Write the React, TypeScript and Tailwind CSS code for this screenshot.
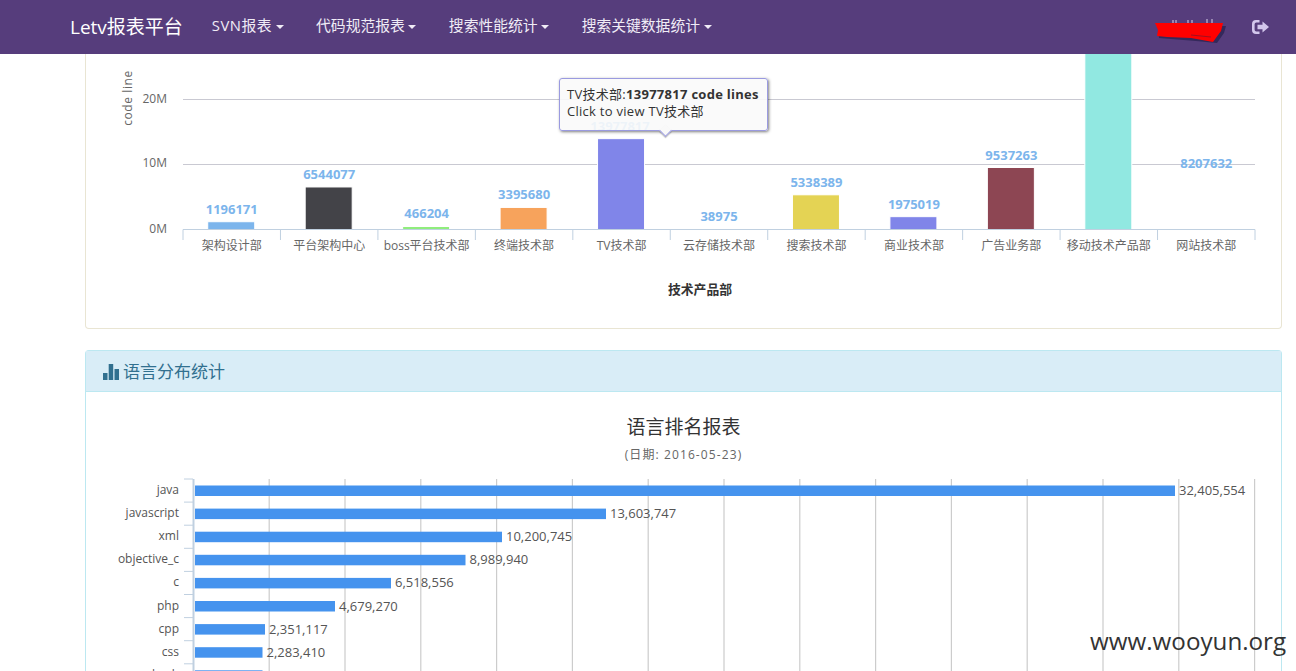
const uiFont = '"Open Sans", "Noto Sans CJK SC", sans-serif';

const departments = [
  { name: '架构设计部', value: 1196171, color: '#7cb5ec' },
  { name: '平台架构中心', value: 6544077, color: '#434348' },
  { name: 'boss平台技术部', value: 466204, color: '#90ed7d' },
  { name: '终端技术部', value: 3395680, color: '#f7a35c' },
  { name: 'TV技术部', value: 13977817, color: '#8085e9' },
  { name: '云存储技术部', value: 38975, color: '#f15c80' },
  { name: '搜索技术部', value: 5338389, color: '#e4d354' },
  { name: '商业技术部', value: 1975019, color: '#8085e9' },
  { name: '广告业务部', value: 9537263, color: '#8d4653' },
  { name: '移动技术产品部', value: 40000000, color: '#91e8e1' },
  { name: '网站技术部', value: 8207632, color: 'none' },
];

const languages = [
  { name: 'java', label: '32,405,554', end: 1175 },
  { name: 'javascript', label: '13,603,747', end: 606 },
  { name: 'xml', label: '10,200,745', end: 502 },
  { name: 'objective_c', label: '8,989,940', end: 465.5 },
  { name: 'c', label: '6,518,556', end: 391 },
  { name: 'php', label: '4,679,270', end: 335 },
  { name: 'cpp', label: '2,351,117', end: 265 },
  { name: 'css', label: '2,283,410', end: 262.5 },
  { name: 'bash', label: '2,270,500', end: 262.5 },
];

const menus = ['SVN报表', '代码规范报表', '搜索性能统计', '搜索关键数据统计'];

function NavBar() {
  return (
    <header className="flex h-[54px] shrink-0 items-center bg-[#563d7c] pl-[55px] text-[#f0ecf6]">
      <a className="pl-[15px] pr-[12.75px] text-[19px] text-white">Letv报表平台</a>
      {menus.map((menu) => (
        <a key={menu} className="flex items-center px-[16.25px] pb-[3px] text-[14.8px] first-of-type:tracking-normal [&:nth-child(2)]:tracking-[0.5px]">
          {menu}
          <span className="ml-[3.5px] mt-[2px] h-0 w-0 border-x-4 border-t-4 border-x-transparent border-t-[#f0ecf6]" />
        </a>
      ))}
      <div className="ml-auto flex items-center pr-[27px]">
        <Scribble />
        <svg viewBox="0 0 17 16" className="ml-[25px] h-4 w-[17px] fill-[#d3c7ec]">
          <path d="M7.5 1H4a4 4 0 0 0-4 4v6a4 4 0 0 0 4 4h3.5v-2.6H4.3A1.7 1.7 0 0 1 2.6 10.7V5.3A1.7 1.7 0 0 1 4.3 3.6h3.2z" />
          <path d="M5.5 5.7h5V2.4L17 8l-6.5 5.6v-3.3h-5z" />
        </svg>
      </div>
    </header>
  );
}

function Scribble() {
  return (
    <svg viewBox="0 0 72 32" className="h-8 w-[72px]">
      <path d="M18 9v3M21 9v3M33 9v3M37 9v3M52 8v4M57 8v4" stroke="#d8d0e6" strokeWidth="1" />
      <path d="M3 15 L71 15 L69 22 L62 32 L41 30 L16 28 L4 27z" fill="#2a2350" opacity="0.75" />
      <path d="M0 12 L68 12 L66 20 L58 31 L36 27 L12 26 L2 25 L3 19z" fill="#ff0000" />
      <path d="M36 24 L56 26" stroke="#a01020" strokeWidth="1" />
    </svg>
  );
}

function DepartmentChart() {
  const step = (1255 - 183) / 11;
  const zero = 229.5;

  return (
    <svg viewBox="86 54 1195 274" className="block h-[274px] w-[1195px]">
      {[164.5, 99.5].map((y) => (
        <line key={y} x1="183" x2="1255" y1={y} y2={y} stroke="#c9c9d2" />
      ))}
      {departments.map((dep, i) => {
        const center = 183 + step * i + step / 2;
        const height = (dep.value * 65) / 10000000;
        return (
          <g key={dep.name}>
            <line x1={183 + step * i} x2={183 + step * i} y1={zero} y2="240" stroke="#c0d0e0" />
            {dep.color !== 'none' && (
              <rect x={center - 24} y={zero - height} width="47" height={height} fill={dep.color} stroke="#fff" />
            )}
            {i !== 4 && i !== 9 && (
              <text
                x={center}
                y={i === 10 ? 167.5 : zero - height - 8}
                textAnchor="middle"
                className="fill-[#7cb5ec] text-[13px] font-bold"
                style={{ fontFamily: uiFont }}
              >
                {dep.value}
              </text>
            )}
            <text
              x={center}
              y="250"
              textAnchor="middle"
              className="fill-[#666666] text-[12px]"
              style={{ fontFamily: uiFont }}
            >
              {dep.name}
            </text>
          </g>
        );
      })}
      <line x1="183" x2="1255" y1={zero} y2={zero} stroke="#c0d0e0" />
      <line x1="1255" x2="1255" y1={zero} y2="240" stroke="#c0d0e0" />
      <text x="620" y="131" textAnchor="middle" className="fill-[#7cb5ec] text-[13px] font-bold" style={{ fontFamily: uiFont }}>
        13977817
      </text>
      {[
        ['20M', 103],
        ['10M', 167],
        ['0M', 233],
      ].map(([label, y]) => (
        <text key={label} x="167" y={y} textAnchor="end" className="fill-[#666666] text-[12px]" style={{ fontFamily: uiFont }}>
          {label}
        </text>
      ))}
      <text
        transform="translate(132 98) rotate(-90)"
        textAnchor="middle"
        className="fill-[#666666] text-[12px] tracking-[0.6px]"
        style={{ fontFamily: uiFont }}
      >
        code line
      </text>
      <text x="700" y="294" textAnchor="middle" className="fill-[#333333] text-[12.8px] font-bold" style={{ fontFamily: uiFont }}>
        技术产品部
      </text>
    </svg>
  );
}

function ChartTooltip() {
  return (
    <div className="absolute left-[473px] top-[24px] h-[53px] w-[209px] rounded-[3px] border border-[#9a9ae0] bg-[#f9f9f9]/90 px-[7px] pt-[7px] text-[13px] leading-[17px] tracking-[0.28px] text-[#333333] shadow-[1px_1px_3px_rgba(0,0,0,0.5)]">
      <div>
        TV技术部:<b>13977817 code lines</b>
      </div>
      <div>Click to view TV技术部</div>
      <span className="absolute left-[101px] top-[47px] size-[9px] rotate-45 border-b border-r border-[#9a9ae0] bg-[#f9f9f9] shadow-[1px_1px_1px_rgba(0,0,0,0.25)]" />
    </div>
  );
}

function LanguageChart() {
  const gridLines = Array.from({ length: 14 }, (_, i) => 269.2 + i * 75.8);

  return (
    <svg viewBox="86 470 1195 201" className="block h-[201px] w-[1195px]">
      {gridLines.map((x) => (
        <line key={x} x1={x} x2={x} y1="479" y2="671" stroke="#cccccc" strokeWidth="1.2" />
      ))}
      <line x1="193.5" x2="193.5" y1="479" y2="671" stroke="#c0d0e0" strokeWidth="2" />
      {languages.map((lang, i) => {
        const center = 490.5 + i * 23.1;
        return (
          <g key={lang.name}>
            <line x1="184" x2="193" y1={center - 11.5} y2={center - 11.5} stroke="#c0d0e0" />
            <rect x="195" y={center - 5} width={lang.end - 195} height="10.5" fill="#4593ee" />
            <text x="179" y={center + 3.5} textAnchor="end" className="fill-[#555555] text-[12px]" style={{ fontFamily: uiFont }}>
              {lang.name}
            </text>
            <text x={lang.end + 4} y={center + 4.5} className="fill-[#555555] text-[13px]" style={{ fontFamily: uiFont }}>
              {lang.label}
            </text>
          </g>
        );
      })}
    </svg>
  );
}

export default function App() {
  return (
    <div className="relative flex h-[671px] w-[1296px] flex-col overflow-hidden bg-white" style={{ fontFamily: uiFont }}>
      <NavBar />
      <main className="flex flex-col pl-[85px]">
        <section className="relative h-[275px] w-[1197px] rounded-b border border-t-0 border-[#e9e5d3]">
          <DepartmentChart />
          <ChartTooltip />
        </section>
        <section className="mt-[21px] w-[1197px] rounded-t border border-b-0 border-[#bce8f1]">
          <div className="flex h-[41px] items-center gap-[4px] border-b border-[#bce8f1] bg-[#d9edf7] pl-[17px] pt-[2px] text-[17px] text-[#31708f]">
            <svg viewBox="0 0 16 16" className="size-4 fill-[#31708f]">
              <path d="M0 9h4.5v7H0zM5.7 0h4.5v16H5.7zM11.5 5H16v11h-4.5z" />
            </svg>
            语言分布统计
          </div>
          <div className="flex h-[78px] flex-col items-center pt-[20px]">
            <h2 className="text-[19px] leading-[30px] text-[#333333]">语言排名报表</h2>
            <p className="mt-[4px] text-[12px] leading-[18px] tracking-[1.1px] text-[#666666]">(日期: 2016-05-23)</p>
          </div>
          <LanguageChart />
        </section>
      </main>
      <div className="absolute left-[1090px] top-[625px] text-[24.2px] leading-[32px] text-[#333333]">www.wooyun.org</div>
    </div>
  );
}
